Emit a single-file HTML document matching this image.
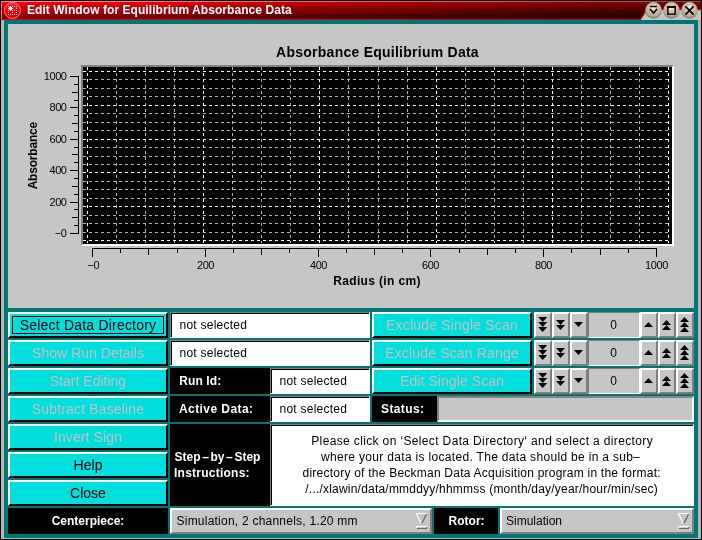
<!DOCTYPE html>
<html><head><meta charset="utf-8"><title>Edit Window for Equilibrium Absorbance Data</title>
<style>
*{margin:0;padding:0;box-sizing:border-box}
html,body{width:702px;height:540px;overflow:hidden;background:#000}
body{position:relative;font-family:"Liberation Sans",sans-serif;font-size:12px;color:#000}
#root{position:absolute;left:0;top:0;width:702px;height:540px;will-change:transform}
.a{position:absolute}
.btn{position:absolute;height:26px;background:#00dede;border:2px solid;border-color:#fff #000 #000 #fff;font-size:14px;text-align:center;line-height:21px;padding-top:1px;white-space:nowrap;letter-spacing:.07px}
.dis{color:#c4c2c2}
.lbl{position:absolute;background:#000;color:#fff;font-weight:bold;font-size:12px;white-space:nowrap;line-height:26px;height:26px}
.fld{position:absolute;height:26px;background:#fff;border:1px solid;border-color:#858080 #fff #fff #858080;box-shadow:inset 1px 1px 0 #000,inset -1px -1px 0 #fff;font-size:12px;line-height:24px;padding-left:8.5px;white-space:nowrap;letter-spacing:.25px}
.cb{position:absolute;width:18px;height:26px;background:#c6c6c6;border:2px solid;border-color:#fff #7e7e7e #7e7e7e #fff}
.val{position:absolute;height:26px;background:#c6c6c6;border:1px solid;border-color:#7e7e7e #fff #fff #7e7e7e;text-align:center;line-height:25px;font-size:12px;padding-right:1px}
.combo{position:absolute;height:26px;background:#c6c6c6;border:2px solid;border-color:#fff #7e7e7e #7e7e7e #fff;font-size:12px;line-height:22px;padding-left:5px;white-space:nowrap}
svg{position:absolute;left:0;top:0;overflow:visible}
text{font-family:"Liberation Sans",sans-serif}
</style></head>
<body>
<div id="root">
<div class="a" style="left:1px;top:1px;width:700px;height:538px;background:#b6b6b6"></div>
<div class="a" style="left:4px;top:20px;width:694px;height:518px;background:#007676"></div>
<div class="a" style="left:1px;top:1px;width:700px;height:19px;background:linear-gradient(to bottom,rgba(0,0,0,0) 2px,rgba(0,0,0,.45) 17px,rgba(0,0,0,.45) 19px),linear-gradient(to right,#f20010 0,#e0000c 20%,#c40006 42%,#a80000 62%,#8c0000 80%,#7c0000 100%)"></div>
<div class="a" style="left:1px;top:1px;width:700px;height:19px;background:linear-gradient(to bottom,rgba(0,0,0,0) 2px,rgba(0,0,0,.62) 17px,rgba(0,0,0,.62) 19px);-webkit-mask-image:linear-gradient(to right,transparent 0,#000 100%);mask-image:linear-gradient(to right,transparent 0,#000 100%)"></div>
<div class="a" style="left:1px;top:1px;width:700px;height:1px;background:linear-gradient(to right,#ff8c8c,#d86060 60%,#a84040)"></div>
<div class="a" style="left:1px;top:1px;width:1px;height:19px;background:#ff7070"></div>
<svg width="702" height="24" viewBox="0 0 702 24"><path d="M640 20 L646.5 10 L701 10 L701 20 Z" fill="#c4c4c4"/><path d="M1 19.5 L640.5 19.5 L646.8 9.6 L701 9.6" fill="none" stroke="#e00000" stroke-width="1.1"/><defs><radialGradient id="rb" cx="50%" cy="35%" r="60%"><stop offset="0" stop-color="#fff4e0"/><stop offset=".35" stop-color="#d2c6b0"/><stop offset=".8" stop-color="#b8ac98"/><stop offset="1" stop-color="#8a7e70"/></radialGradient></defs><defs><linearGradient id="ig" x1="0" y1="0" x2="0" y2="1"><stop offset="0" stop-color="#ff3038"/><stop offset=".5" stop-color="#f80008"/><stop offset="1" stop-color="#e80000"/></linearGradient></defs><circle cx="12.5" cy="10.5" r="8" fill="url(#ig)" stroke="#ff8888" stroke-width="1"/><path shape-rendering="crispEdges" fill="#ffe4e4" d="M8 6h1v1h-1zM10 6h1v1h-1zM12 6h1v1h-1zM14 6h1v1h-1zM16 6h1v1h-1zM8 8h1v1h-1zM16 8h1v1h-1zM8 10h1v1h-1zM12 10h1v1h-1zM14 10h1v1h-1zM16 10h1v1h-1zM8 12h1v1h-1zM12 12h1v1h-1zM16 12h1v1h-1zM8 14h1v1h-1zM10 14h1v1h-1zM12 14h1v1h-1zM14 14h1v1h-1zM16 14h1v1h-1z"/><path shape-rendering="crispEdges" d="M9 7h3v3h-3zM10 6h1v5h-1zM8 8h5v1h-5z" fill="#fff"/><circle cx="653.5" cy="10.4" r="8.3" fill="url(#rb)"/><circle cx="671.5" cy="10.4" r="8.3" fill="url(#rb)"/><circle cx="689.5" cy="10.4" r="8.3" fill="url(#rb)"/><path d="M650 6.5h7" stroke="#000" stroke-width="1.4" fill="none"/><path d="M650 9 L653.5 13 L657 9" stroke="#000" stroke-width="1.6" fill="none"/><rect x="667.8" y="6.8" width="7.4" height="7.4" fill="none" stroke="#000" stroke-width="1.4"/><path d="M667 7h9" stroke="#000" stroke-width="2"/><path d="M685.4 6.4 L693.6 14.6 M693.6 6.4 L685.4 14.6" stroke="#000" stroke-width="1.7" fill="none"/></svg>
<div class="a" style="left:27px;top:3px;height:14px;line-height:14px;font-size:12px;font-weight:bold;color:#fff;white-space:nowrap;letter-spacing:.06px" id="title">Edit Window for Equilibrium Absorbance Data</div>
<div class="a" style="left:8px;top:24px;width:686px;height:284px;background:#c6c6c6"></div>
<div class="a" style="left:81px;top:65px;width:593px;height:181px;background:#000;border:2px solid;border-color:#808080 #fff #fff #808080"></div>
<svg width="702" height="310" viewBox="0 0 702 310" shape-rendering="crispEdges"><path d="M87.5 67V243" stroke="#ffffff" stroke-width="1" stroke-dasharray="3 3" stroke-dashoffset="0" fill="none"/><path d="M116.5 67V243" stroke="#b4b4b4" stroke-width="1" stroke-dasharray="3 3" stroke-dashoffset="0" fill="none"/><path d="M145.5 67V243" stroke="#b4b4b4" stroke-width="1" stroke-dasharray="3 3" stroke-dashoffset="0" fill="none"/><path d="M174.5 67V243" stroke="#b4b4b4" stroke-width="1" stroke-dasharray="3 3" stroke-dashoffset="0" fill="none"/><path d="M203.5 67V243" stroke="#ffffff" stroke-width="1" stroke-dasharray="3 3" stroke-dashoffset="0" fill="none"/><path d="M232.5 67V243" stroke="#b4b4b4" stroke-width="1" stroke-dasharray="3 3" stroke-dashoffset="0" fill="none"/><path d="M261.5 67V243" stroke="#b4b4b4" stroke-width="1" stroke-dasharray="3 3" stroke-dashoffset="0" fill="none"/><path d="M290.5 67V243" stroke="#b4b4b4" stroke-width="1" stroke-dasharray="3 3" stroke-dashoffset="0" fill="none"/><path d="M319.5 67V243" stroke="#ffffff" stroke-width="1" stroke-dasharray="3 3" stroke-dashoffset="0" fill="none"/><path d="M348.5 67V243" stroke="#b4b4b4" stroke-width="1" stroke-dasharray="3 3" stroke-dashoffset="0" fill="none"/><path d="M378.5 67V243" stroke="#b4b4b4" stroke-width="1" stroke-dasharray="3 3" stroke-dashoffset="0" fill="none"/><path d="M407.5 67V243" stroke="#b4b4b4" stroke-width="1" stroke-dasharray="3 3" stroke-dashoffset="0" fill="none"/><path d="M436.5 67V243" stroke="#ffffff" stroke-width="1" stroke-dasharray="3 3" stroke-dashoffset="0" fill="none"/><path d="M465.5 67V243" stroke="#b4b4b4" stroke-width="1" stroke-dasharray="3 3" stroke-dashoffset="0" fill="none"/><path d="M494.5 67V243" stroke="#b4b4b4" stroke-width="1" stroke-dasharray="3 3" stroke-dashoffset="0" fill="none"/><path d="M523.5 67V243" stroke="#b4b4b4" stroke-width="1" stroke-dasharray="3 3" stroke-dashoffset="0" fill="none"/><path d="M552.5 67V243" stroke="#ffffff" stroke-width="1" stroke-dasharray="3 3" stroke-dashoffset="0" fill="none"/><path d="M581.5 67V243" stroke="#b4b4b4" stroke-width="1" stroke-dasharray="3 3" stroke-dashoffset="0" fill="none"/><path d="M610.5 67V243" stroke="#b4b4b4" stroke-width="1" stroke-dasharray="3 3" stroke-dashoffset="0" fill="none"/><path d="M639.5 67V243" stroke="#b4b4b4" stroke-width="1" stroke-dasharray="3 3" stroke-dashoffset="0" fill="none"/><path d="M668.5 67V243" stroke="#ffffff" stroke-width="1" stroke-dasharray="3 3" stroke-dashoffset="0" fill="none"/><path d="M83 71.5H669" stroke="#ffffff" stroke-width="1" stroke-dasharray="3 3" fill="none"/><path d="M83 79.5H669" stroke="#b4b4b4" stroke-width="1" stroke-dasharray="3 3" fill="none"/><path d="M83 88.5H669" stroke="#b4b4b4" stroke-width="1" stroke-dasharray="3 3" fill="none"/><path d="M83 96.5H669" stroke="#b4b4b4" stroke-width="1" stroke-dasharray="3 3" fill="none"/><path d="M83 105.5H669" stroke="#ffffff" stroke-width="1" stroke-dasharray="3 3" fill="none"/><path d="M83 113.5H669" stroke="#b4b4b4" stroke-width="1" stroke-dasharray="3 3" fill="none"/><path d="M83 122.5H669" stroke="#b4b4b4" stroke-width="1" stroke-dasharray="3 3" fill="none"/><path d="M83 130.5H669" stroke="#b4b4b4" stroke-width="1" stroke-dasharray="3 3" fill="none"/><path d="M83 139.5H669" stroke="#ffffff" stroke-width="1" stroke-dasharray="3 3" fill="none"/><path d="M83 147.5H669" stroke="#b4b4b4" stroke-width="1" stroke-dasharray="3 3" fill="none"/><path d="M83 156.5H669" stroke="#b4b4b4" stroke-width="1" stroke-dasharray="3 3" fill="none"/><path d="M83 164.5H669" stroke="#b4b4b4" stroke-width="1" stroke-dasharray="3 3" fill="none"/><path d="M83 172.5H669" stroke="#ffffff" stroke-width="1" stroke-dasharray="3 3" fill="none"/><path d="M83 181.5H669" stroke="#b4b4b4" stroke-width="1" stroke-dasharray="3 3" fill="none"/><path d="M83 189.5H669" stroke="#b4b4b4" stroke-width="1" stroke-dasharray="3 3" fill="none"/><path d="M83 198.5H669" stroke="#b4b4b4" stroke-width="1" stroke-dasharray="3 3" fill="none"/><path d="M83 206.5H669" stroke="#ffffff" stroke-width="1" stroke-dasharray="3 3" fill="none"/><path d="M83 215.5H669" stroke="#b4b4b4" stroke-width="1" stroke-dasharray="3 3" fill="none"/><path d="M83 223.5H669" stroke="#b4b4b4" stroke-width="1" stroke-dasharray="3 3" fill="none"/><path d="M83 232.5H669" stroke="#b4b4b4" stroke-width="1" stroke-dasharray="3 3" fill="none"/><path d="M83 240.5H669" stroke="#ffffff" stroke-width="1" stroke-dasharray="3 3" fill="none"/><path d="M78.5 76.0V234.0M70 76.5H79M74 84.5H79M72 92.5H79M74 100.5H79M70 107.5H79M74 115.5H79M72 123.5H79M74 131.5H79M70 139.5H79M74 147.5H79M72 154.5H79M74 162.5H79M70 170.5H79M74 178.5H79M72 186.5H79M74 194.5H79M70 202.5H79M74 209.5H79M72 217.5H79M74 225.5H79M70 233.5H79" stroke="#000" stroke-width="1" fill="none"/><path d="M92.0 248.5H657.0M92.5 248V257M120.5 248V253M148.5 248V255M177.5 248V253M205.5 248V257M233.5 248V253M261.5 248V255M289.5 248V253M318.5 248V257M346.5 248V253M374.5 248V255M402.5 248V253M430.5 248V257M459.5 248V253M487.5 248V255M515.5 248V253M543.5 248V257M571.5 248V253M600.5 248V255M628.5 248V253M656.5 248V257" stroke="#000" stroke-width="1" fill="none"/></svg>
<svg width="702" height="310" viewBox="0 0 702 310"><text x="377.5" y="57" font-size="14" font-weight="bold" text-anchor="middle" letter-spacing=".25" id="ptitle">Absorbance Equilibrium Data</text><text x="377" y="285" font-size="12" font-weight="bold" text-anchor="middle" letter-spacing=".35" id="xlab">Radius (in cm)</text><text transform="translate(36.5 155.7) rotate(-90)" font-size="12" font-weight="bold" text-anchor="middle" letter-spacing="-.2" id="ylab">Absorbance</text><text x="66.6" y="80.1" font-size="11" letter-spacing="-.4" text-anchor="end">1000</text><text x="66.6" y="111.1" font-size="11" letter-spacing="-.4" text-anchor="end">800</text><text x="66.6" y="143.1" font-size="11" letter-spacing="-.4" text-anchor="end">600</text><text x="66.6" y="174.1" font-size="11" letter-spacing="-.4" text-anchor="end">400</text><text x="66.6" y="206.1" font-size="11" letter-spacing="-.4" text-anchor="end">200</text><text x="66.6" y="237.1" font-size="11" letter-spacing="-.4" text-anchor="end">−0</text><text x="93.3" y="269.3" font-size="11" letter-spacing="-.4" text-anchor="middle">−0</text><text x="205.5" y="269.3" font-size="11" letter-spacing="-.4" text-anchor="middle">200</text><text x="318.5" y="269.3" font-size="11" letter-spacing="-.4" text-anchor="middle">400</text><text x="430.5" y="269.3" font-size="11" letter-spacing="-.4" text-anchor="middle">600</text><text x="543.5" y="269.3" font-size="11" letter-spacing="-.4" text-anchor="middle">800</text><text x="656.5" y="269.3" font-size="11" letter-spacing="-.4" text-anchor="middle">1000</text></svg>
<div class="btn" style="left:8px;top:312px;width:160px;letter-spacing:0.2px">Select Data Directory</div>
<div class="btn dis" style="left:8px;top:340px;width:160px;letter-spacing:0.04px">Show Run Details</div>
<div class="btn dis" style="left:8px;top:368px;width:160px;letter-spacing:0px">Start Editing</div>
<div class="btn dis" style="left:8px;top:396px;width:160px;letter-spacing:0.15px">Subtract Baseline</div>
<div class="btn dis" style="left:8px;top:424px;width:160px;letter-spacing:0.12px">Invert Sign</div>
<div class="btn" style="left:8px;top:452px;width:160px;letter-spacing:0.05px">Help</div>
<div class="btn" style="left:8px;top:480px;width:160px;letter-spacing:0px">Close</div>
<div class="a" style="left:12px;top:316px;width:152px;height:18px;border:1px solid #000"></div>
<div class="lbl" style="left:8px;top:508px;width:160px;text-align:center">Centerpiece:</div>
<div class="fld" style="left:170px;top:312px;width:200px">not selected</div>
<div class="fld" style="left:170px;top:340px;width:200px">not selected</div>
<div class="lbl" style="left:170px;top:368px;width:100px;padding-left:9.3px;letter-spacing:.1px">Run Id:</div>
<div class="fld" style="left:270px;top:368px;width:100px">not selected</div>
<div class="lbl" style="left:170px;top:396px;width:100px;padding-left:9px;letter-spacing:.42px">Active Data:</div>
<div class="fld" style="left:270px;top:396px;width:100px">not selected</div>
<div class="lbl" style="left:170px;top:424px;width:100px;height:82px;padding-left:4px;line-height:16px;padding-top:25px;letter-spacing:0"><span style="margin-left:.6px">Step</span><span style="margin:0 1.6px">–</span>by<span style="margin:0 1.6px">–</span>Step<br><span style="letter-spacing:.24px">Instructions:</span></div>
<div class="fld" style="left:270px;top:424px;width:424px;height:82px;padding:0;text-align:center;line-height:16px;padding-top:8px;letter-spacing:0" id="instr"><div style="letter-spacing:.36px;padding-left:.3px">Please click on ‘Select Data Directory‘ and select a directory</div><div style="letter-spacing:.32px;margin-left:-2.7px">where your data is located. The data should be in a sub–</div><div style="letter-spacing:.23px;margin-left:-.7px">directory of the Beckman Data Acquisition program in the format:</div><div style="letter-spacing:.21px;margin-left:-.7px">/.../xlawin/data/mmddyy/hhmmss (month/day/year/hour/min/sec)</div></div>
<div class="btn dis" style="left:372px;top:312px;width:160px;letter-spacing:0.18px">Exclude Single Scan</div>
<div class="cb" style="left:534px;top:312px"></div>
<div class="cb" style="left:552px;top:312px"></div>
<div class="cb" style="left:570px;top:312px"></div>
<div class="val" style="left:588px;top:312px;width:52px">0</div>
<div class="cb" style="left:640px;top:312px"></div>
<div class="cb" style="left:658px;top:312px"></div>
<div class="cb" style="left:676px;top:312px"></div>
<svg width="702" height="540" viewBox="0 0 702 540"><path fill="#000" d="M538.2 317h9l-4.5 5zM538.2 322h9l-4.5 5zM538.2 327h9l-4.5 5zM556.0 320h9l-4.5 5zM556.0 325h9l-4.5 5zM574.0 322h9l-4.5 5zM648.5 322l4.5 5h-9zM666.5 320l4.5 5h-9zM666.5 325l4.5 5h-9zM684.5 317l4.5 5h-9zM684.5 322l4.5 5h-9zM684.5 327l4.5 5h-9z"/></svg>
<div class="btn dis" style="left:372px;top:340px;width:160px;letter-spacing:0.16px">Exclude Scan Range</div>
<div class="cb" style="left:534px;top:340px"></div>
<div class="cb" style="left:552px;top:340px"></div>
<div class="cb" style="left:570px;top:340px"></div>
<div class="val" style="left:588px;top:340px;width:52px">0</div>
<div class="cb" style="left:640px;top:340px"></div>
<div class="cb" style="left:658px;top:340px"></div>
<div class="cb" style="left:676px;top:340px"></div>
<svg width="702" height="540" viewBox="0 0 702 540"><path fill="#000" d="M538.2 345h9l-4.5 5zM538.2 350h9l-4.5 5zM538.2 355h9l-4.5 5zM556.0 348h9l-4.5 5zM556.0 353h9l-4.5 5zM574.0 350h9l-4.5 5zM648.5 350l4.5 5h-9zM666.5 348l4.5 5h-9zM666.5 353l4.5 5h-9zM684.5 345l4.5 5h-9zM684.5 350l4.5 5h-9zM684.5 355l4.5 5h-9z"/></svg>
<div class="btn dis" style="left:372px;top:368px;width:160px;letter-spacing:0.08px">Edit Single Scan</div>
<div class="cb" style="left:534px;top:368px"></div>
<div class="cb" style="left:552px;top:368px"></div>
<div class="cb" style="left:570px;top:368px"></div>
<div class="val" style="left:588px;top:368px;width:52px">0</div>
<div class="cb" style="left:640px;top:368px"></div>
<div class="cb" style="left:658px;top:368px"></div>
<div class="cb" style="left:676px;top:368px"></div>
<svg width="702" height="540" viewBox="0 0 702 540"><path fill="#000" d="M538.2 373h9l-4.5 5zM538.2 378h9l-4.5 5zM538.2 383h9l-4.5 5zM556.0 376h9l-4.5 5zM556.0 381h9l-4.5 5zM574.0 378h9l-4.5 5zM648.5 378l4.5 5h-9zM666.5 376l4.5 5h-9zM666.5 381l4.5 5h-9zM684.5 373l4.5 5h-9zM684.5 378l4.5 5h-9zM684.5 383l4.5 5h-9z"/></svg>
<div class="lbl" style="left:372px;top:396px;width:65px;padding-left:9px;letter-spacing:.4px">Status:</div>
<div class="fld" style="left:437px;top:396px;width:257px;background:#c6c6c6;border:2px solid;border-color:#858282 #fff #fff #858282;box-shadow:none"></div>
<div class="combo" style="left:170px;top:508px;width:262px;letter-spacing:.23px;padding-left:4.5px">Simulation, 2 channels, 1.20 mm</div>
<svg width="702" height="540" viewBox="0 0 702 540"><path d="M416 513.5H427" stroke="#fff" stroke-width="1"/><path d="M416.5 514L421.2 523.3" stroke="#fff" stroke-width="1.2" fill="none"/><path d="M426.6 514L421.9 523.3" stroke="#6a6a6a" stroke-width="1.4" fill="none"/><path d="M416 526.5H427M416.5 526V528" stroke="#fff" stroke-width="1" fill="none"/><path d="M417 528.5H427M426.5 527V529" stroke="#6a6a6a" stroke-width="1" fill="none"/></svg>
<div class="lbl" style="left:434px;top:508px;width:64px;padding-left:14.6px">Rotor:</div>
<div class="combo" style="left:500px;top:508px;width:194px;padding-left:4px">Simulation</div>
<svg width="702" height="540" viewBox="0 0 702 540"><path d="M678 513.5H689" stroke="#fff" stroke-width="1"/><path d="M678.5 514L683.2 523.3" stroke="#fff" stroke-width="1.2" fill="none"/><path d="M688.6 514L683.9 523.3" stroke="#6a6a6a" stroke-width="1.4" fill="none"/><path d="M678 526.5H689M678.5 526V528" stroke="#fff" stroke-width="1" fill="none"/><path d="M679 528.5H689M688.5 527V529" stroke="#6a6a6a" stroke-width="1" fill="none"/></svg>
<div class="a" style="left:1px;top:538px;width:700px;height:1px;background:#b6b6b6"></div>
<div class="a" style="left:0;top:539px;width:702px;height:1px;background:#000"></div>
</div>
</body></html>
